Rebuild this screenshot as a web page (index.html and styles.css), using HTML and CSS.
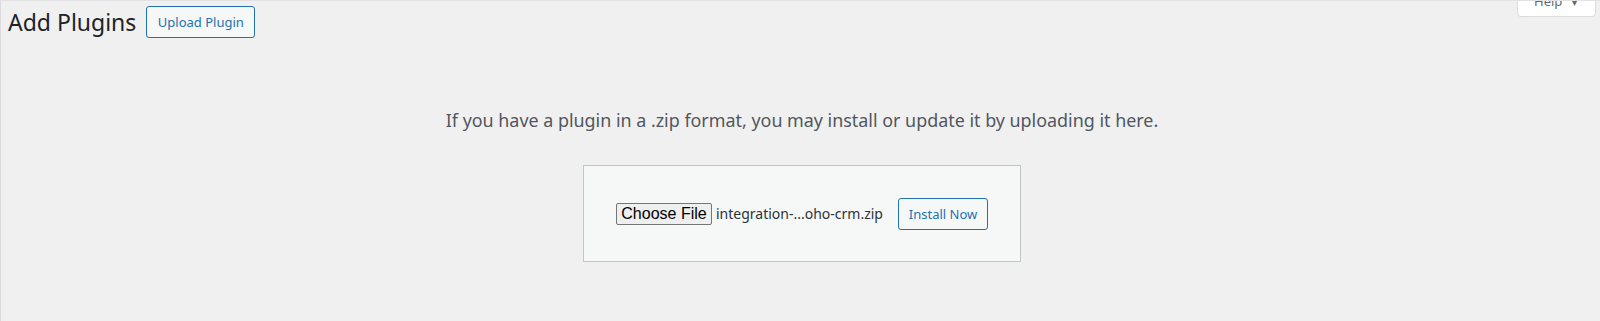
FILE: index.html
```html
<!DOCTYPE html>
<html lang="en">
<head>
  <meta charset="UTF-8">
  <title>Add Plugins</title>
  <link rel="stylesheet" href="styles.css">
</head>
<body>
  <div class="wrap">
    <!-- zakladka pomocy -->
    <div class="help-tab">Help <span class="arrow">&#9662;</span></div>

    <div class="page-head">
      <h1>Add Plugins</h1>
      <button class="page-title-action">Upload Plugin</button>
    </div>

    <div class="upload-plugin">
      <p class="install-help">If you have a plugin in a .zip format, you may install or update it by uploading it here.</p>
      <form class="upload-form">
        <button type="button" class="file-btn">Choose File</button>
        <span class="file-name">integration-...oho-crm.zip</span>
        <button type="button" class="install-btn">Install Now</button>
      </form>
    </div>
  </div>
</body>
</html>
```

FILE: styles.css
```css
html, body {
  margin: 0;
  padding: 0;
  height: 100%;
}

body {
  background-color: #f0f0f1;
  font-family: "Noto Sans", "Open Sans", sans-serif;
  color: #1d2327;
}

.wrap {
  position: relative;
  box-sizing: border-box;
  height: 321px;
  border-top: 1px solid #e2e2e4;
  border-left: 1px solid #dcdcde;
  overflow: hidden;
}

.help-tab {
  position: absolute;
  top: -15px;
  right: 4px;
  box-sizing: border-box;
  width: 79px;
  height: 31px;
  padding: 4px 0 0 16px;
  background-color: #ffffff;
  border: 1px solid #dcdcde;
  border-radius: 0 0 4px 4px;
  font-size: 13px;
  line-height: 20px;
  color: #646970;
  white-space: nowrap;
}

.help-tab .arrow {
  margin-left: 6px;
  font-size: 10px;
}

.page-head {
  display: flex;
  align-items: center;
  gap: 10px;
  padding: 5px 0 0 7px;
}

h1 {
  margin: 0;
  font-size: 23px;
  font-weight: 400;
  line-height: 32px;
  color: #1d2327;
}

.page-title-action {
  box-sizing: border-box;
  width: 109px;
  height: 32px;
  padding: 0;
  font-family: inherit;
  font-size: 13px;
  color: #2271b1;
  background-color: #f6f7f7;
  border: 1px solid #2271b1;
  border-radius: 3px;
  cursor: pointer;
}

.upload-plugin {
  display: flex;
  flex-direction: column;
  align-items: center;
  padding-left: 3px;
}

.install-help {
  margin: 70px 0 33px;
  font-size: 17.9px;
  line-height: 24px;
  color: #50575e;
}

.upload-form {
  box-sizing: border-box;
  width: 438px;
  height: 97px;
  display: flex;
  align-items: center;
  padding: 0 32px;
  background-color: #f6f7f7;
  border: 1px solid #c3c4c7;
}

.file-btn {
  box-sizing: border-box;
  width: 96px;
  height: 22px;
  padding: 0;
  font-family: "Liberation Sans", Arial, sans-serif;
  font-size: 16px;
  color: #000000;
  background-color: #efefef;
  border: 1px solid #767676;
  border-radius: 2px;
}

.file-name {
  margin-left: 4px;
  font-size: 14px;
  color: #2c3338;
}

.install-btn {
  box-sizing: border-box;
  margin-left: auto;
  width: 90px;
  height: 32px;
  padding: 0;
  font-family: inherit;
  font-size: 13px;
  color: #2271b1;
  background-color: #f6f7f7;
  border: 1px solid #2271b1;
  border-radius: 3px;
  cursor: pointer;
}
```
